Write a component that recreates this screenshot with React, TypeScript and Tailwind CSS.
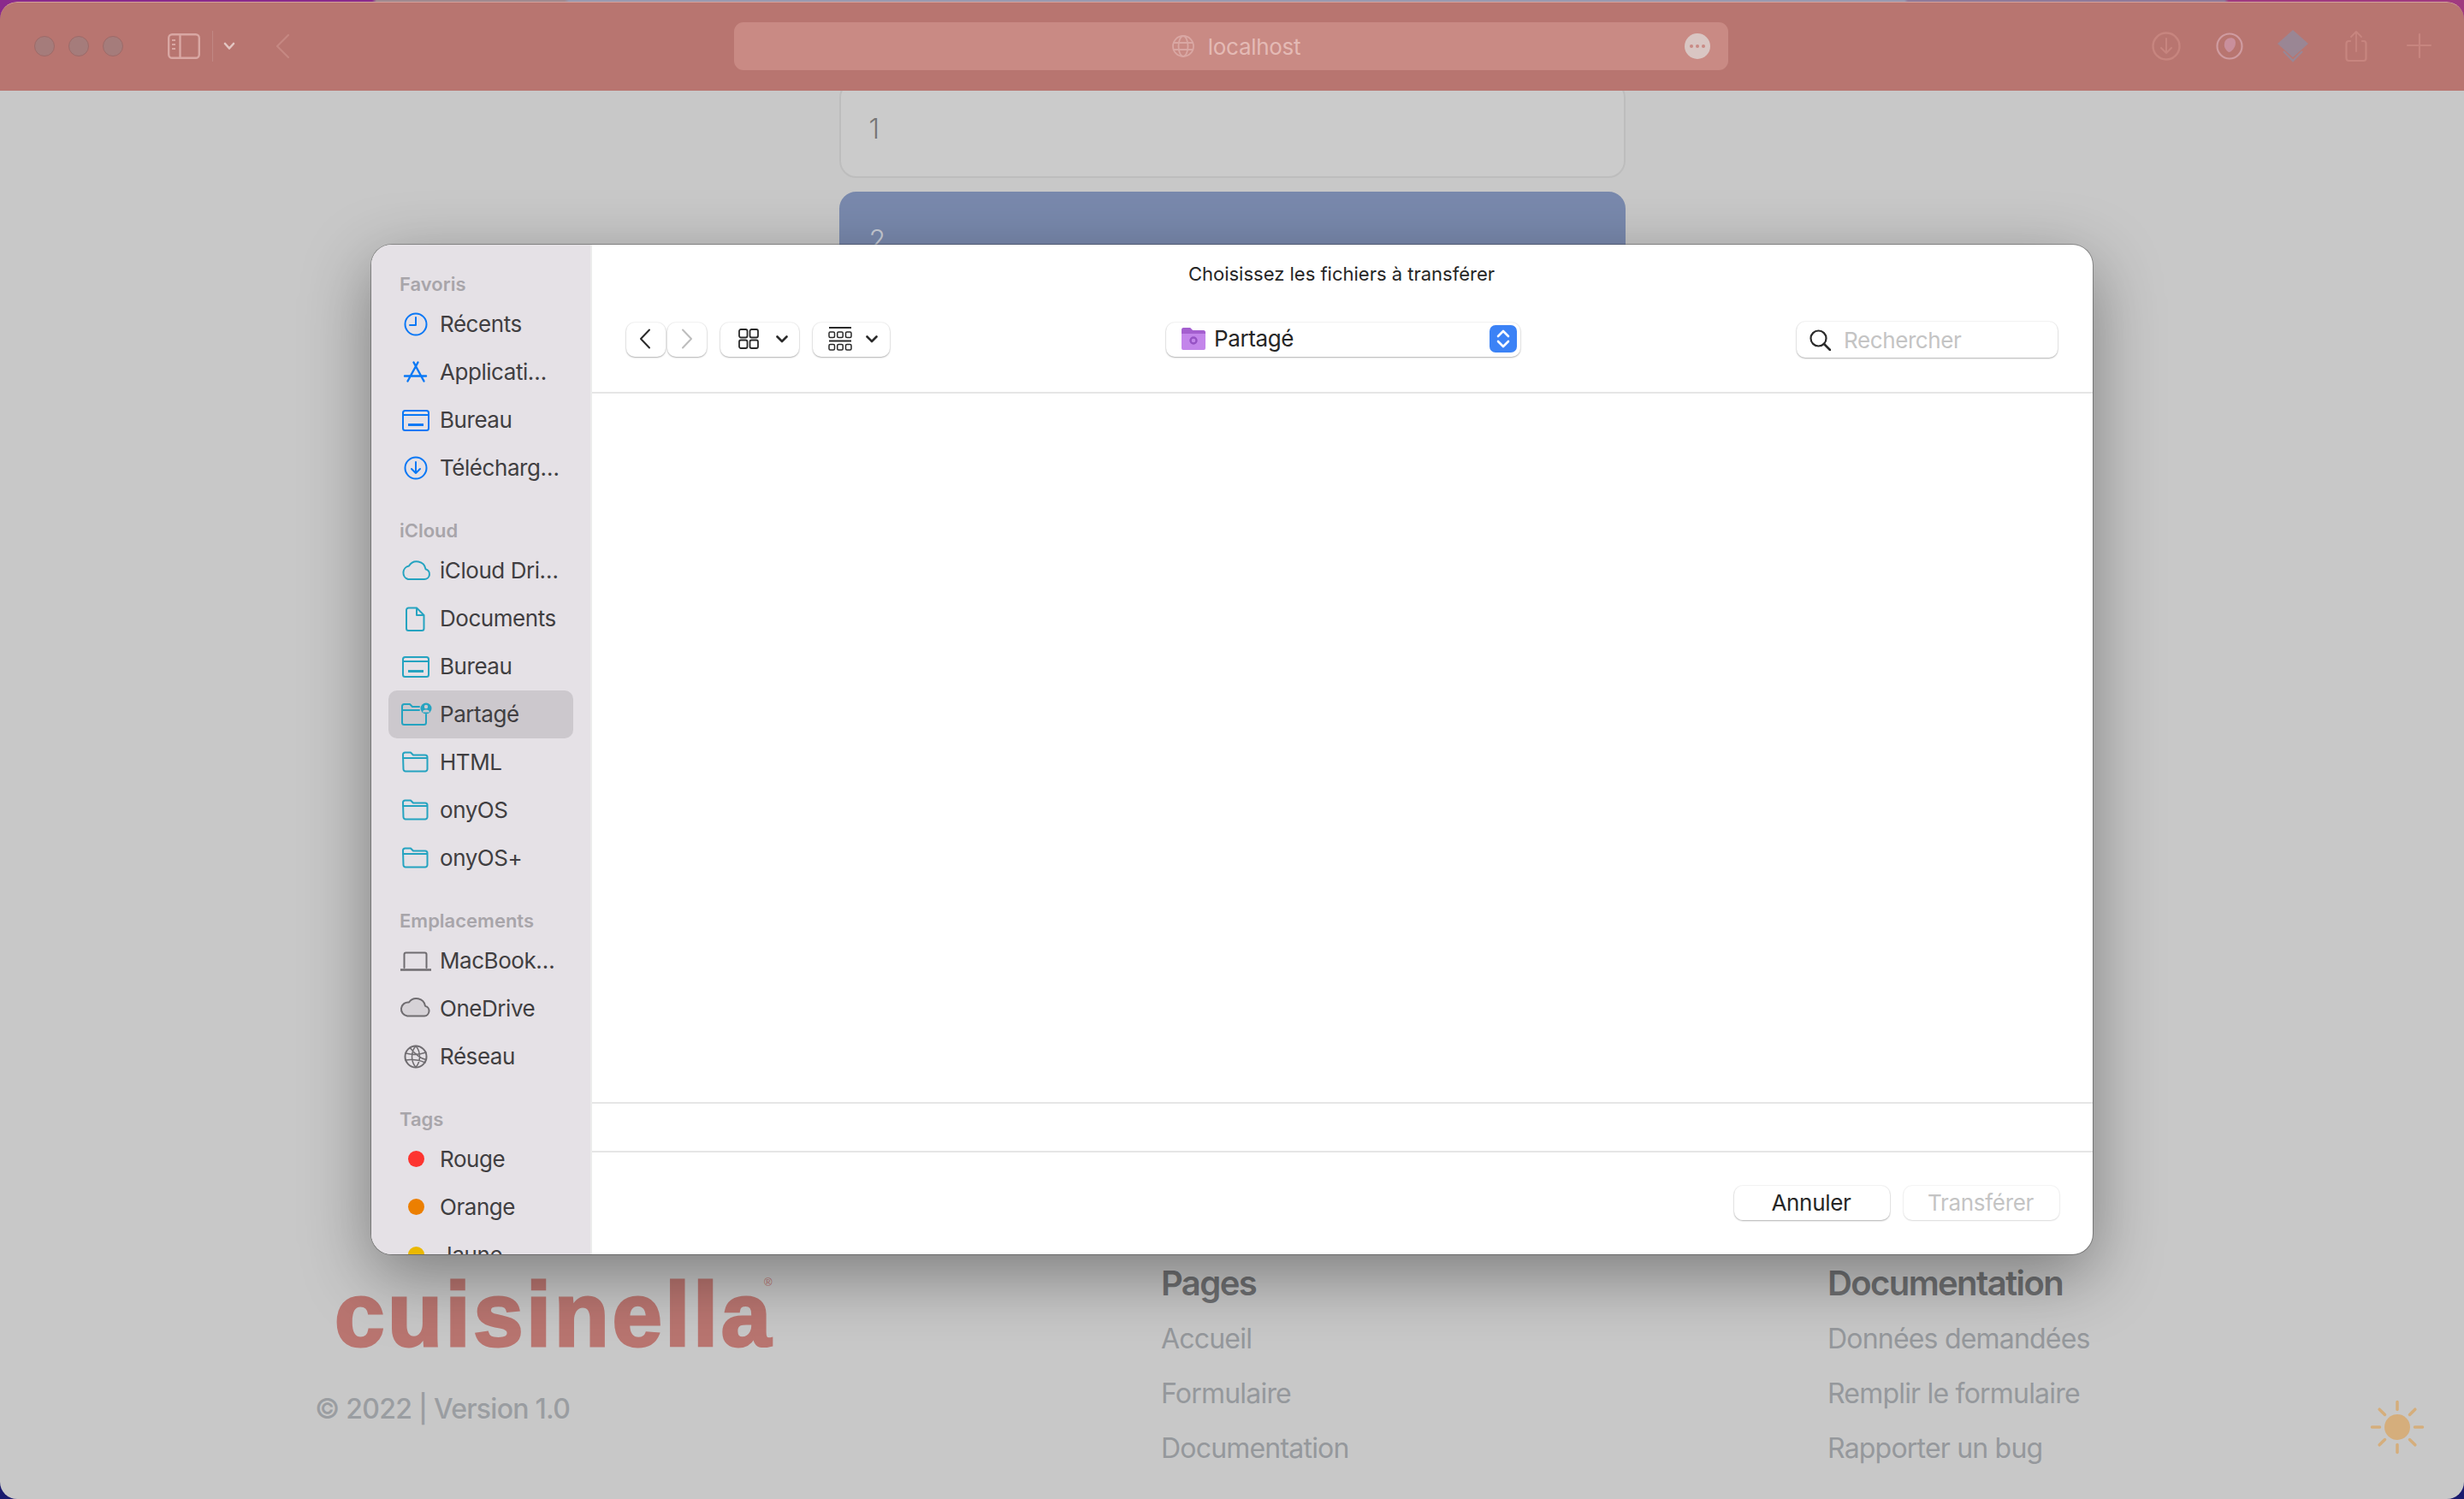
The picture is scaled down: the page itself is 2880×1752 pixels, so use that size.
import type { ReactNode } from 'react'

const blue = 'text-[#0a78f5]'
const teal = 'text-[#25a3c0]'
const gray = 'text-[#6f6c70]'

function Icon({ children, className = '' }: { children: ReactNode; className?: string }) {
  return (
    <svg viewBox="0 0 36 36" fill="none" stroke="currentColor" strokeWidth="2" strokeLinecap="round" strokeLinejoin="round" className={`h-9 w-9 shrink-0 overflow-visible ${className}`}>
      {children}
    </svg>
  )
}

const folderPath = 'M3 9a2.5 2.5 0 0 1 2.5-2.5h6.5l3 3h14a2.5 2.5 0 0 1 2.5 2.5v14a2.5 2.5 0 0 1-2.5 2.5h-23a2.5 2.5 0 0 1-2.5-2.5z'

const icons = {
  clock: (
    <>
      <circle cx="18" cy="18" r="12.5" />
      <path d="M18 10v9h-7" />
    </>
  ),
  apps: <path d="M15.5 6.5L27.5 28.5M20.5 6.5L8.5 28.5M5 22.5h25" strokeWidth="2.4" />,
  desktop: (
    <>
      <rect x="3" y="7" width="30" height="23" rx="2.5" />
      <path d="M3 12h30" />
      <rect x="9" y="22" width="18" height="3" fill="currentColor" stroke="none" />
    </>
  ),
  download: (
    <>
      <circle cx="18" cy="18" r="12.5" />
      <path d="M18 11v13M13 19l5 5 5-5" />
    </>
  ),
  cloud: <path d="M9 28h19a6 6 0 0 0 1.5-11.8A10.5 10.5 0 0 0 10 12.5 8 8 0 0 0 9 28z" />,
  doc: <path d="M9.5 5.5H19L27.5 14v15.5a2.5 2.5 0 0 1-2.5 2.5H9.5A2.5 2.5 0 0 1 7 29.5V8a2.5 2.5 0 0 1 2.5-2.5zM19 5.5V14h8.5" />,
  folder: (
    <>
      <path d={folderPath} />
      <path d="M3 13h28" />
    </>
  ),
  shared: (
    <>
      <path d="M22 9h-8l-3-3H4.500A2.500 2.500 0 0 0 2 8.500v19A2.500 2.500 0 0 0 4.500 30h23a2.500 2.500 0 0 0 2.500-2.500V18M2 13h20" />
      <circle cx="30" cy="11" r="6.500" fill="currentColor" stroke="none" />
      <circle cx="30" cy="9" r="2.200" fill="#ccc8cd" stroke="none" />
      <path d="M26 15.500a4 3 0 0 1 8 0z" fill="#ccc8cd" stroke="none" />
    </>
  ),
  laptop: (
    <>
      <path d="M4.500 26V10.500A2 2 0 0 1 6.500 8.500h22a2 2 0 0 1 2 2V26" />
      <path d="M0 28.500h36" strokeWidth="2.600" strokeLinecap="butt" />
    </>
  ),
  onedrive: <path d="M8 26.500h20a6 6 0 0 0 1-11.800A10.500 10.500 0 0 0 10 10.500 8 8 0 0 0 8 26.500z" fill="#d6d2d7" />,
  globe: (
    <>
      <circle cx="18" cy="18" r="12.500" />
      <path d="M6 14c8 2 16 2 24-1M6 22c8-1 16 0 23 3M18 5.500c-6 7-6 18 0 25M18 5.500c6 7 6 18 0 25M11 7.500c5 6 12 13 19 14" strokeWidth="1.500" />
    </>
  )
}

type Row = { label: string; icon?: keyof typeof icons; color?: string; dot?: string; active?: boolean }

const sections: { title: string; rows: Row[] }[] = [
  {
    title: 'Favoris',
    rows: [
      { label: 'Récents', icon: 'clock', color: blue },
      { label: 'Applicati…', icon: 'apps', color: blue },
      { label: 'Bureau', icon: 'desktop', color: blue },
      { label: 'Télécharg…', icon: 'download', color: blue }
    ]
  },
  {
    title: 'iCloud',
    rows: [
      { label: 'iCloud Dri…', icon: 'cloud', color: teal },
      { label: 'Documents', icon: 'doc', color: teal },
      { label: 'Bureau', icon: 'desktop', color: teal },
      { label: 'Partagé', icon: 'shared', color: teal, active: true },
      { label: 'HTML', icon: 'folder', color: teal },
      { label: 'onyOS', icon: 'folder', color: teal },
      { label: 'onyOS+', icon: 'folder', color: teal }
    ]
  },
  {
    title: 'Emplacements',
    rows: [
      { label: 'MacBook…', icon: 'laptop', color: gray },
      { label: 'OneDrive', icon: 'onedrive', color: gray },
      { label: 'Réseau', icon: 'globe', color: gray }
    ]
  },
  {
    title: 'Tags',
    rows: [
      { label: 'Rouge', dot: 'bg-[#fd3430]' },
      { label: 'Orange', dot: 'bg-[#ec7f00]' },
      { label: 'Jaune', dot: 'bg-[#eab800]' }
    ]
  }
]

function Sidebar() {
  return (
    <aside className="h-full w-[258px] shrink-0 overflow-hidden border-r-2 border-[#ececec] bg-[#e5e1e6] pl-[20px] pt-[27px]">
      {sections.map((section) => (
        <div key={section.title} className="mb-[26px]">
          <div className="flex h-[38px] items-center pl-[13px] text-[22px] font-semibold text-[#a8a5aa]">{section.title}</div>
          {section.rows.map((row) => (
            <div key={row.label + section.title} className={`flex h-14 w-[216px] items-center gap-[10px] rounded-[10px] pb-[1px] pl-[14px] text-[26px] tracking-[-0.45px] text-[#403e41] ${row.active ? 'bg-[#ccc8cd]' : ''}`}>
              {row.icon ? (
                <Icon className={row.color}>{icons[row.icon]}</Icon>
              ) : (
                <span className="flex h-9 w-9 shrink-0 items-center justify-center">
                  <span className={`h-[19px] w-[19px] rounded-full ${row.dot}`} />
                </span>
              )}
              <span className="whitespace-nowrap">{row.label}</span>
            </div>
          ))}
        </div>
      ))}
    </aside>
  )
}

const btn = 'flex h-10 items-center rounded-[10px] bg-white pb-[2px] shadow-[0_1px_2px_rgba(0,0,0,0.28),0_0_0_1px_rgba(0,0,0,0.04)]'

function Chevron() {
  return (
    <svg viewBox="0 0 14 9" className="h-[9px] w-[14px]" fill="none" stroke="#2a2a2a" strokeWidth="2.600" strokeLinecap="round" strokeLinejoin="round">
      <path d="M1.500 1.500L7 7l5.500-5.500" />
    </svg>
  )
}

function DialogToolbar() {
  return (
    <div className="flex items-center justify-between pl-[40px] pr-[41px]">
      <div className="flex w-[308px] items-center">
        <div className={`${btn} w-[46px] justify-center pr-[2px]`}>
          <svg viewBox="0 0 14 24" className="h-6 w-[14px]" fill="none" stroke="#2a2a2a" strokeWidth="2" strokeLinecap="round" strokeLinejoin="round">
            <path d="M12 1.500L2 12l10 10.500" />
          </svg>
        </div>
        <div className={`${btn} ml-[2px] w-[46px] justify-center`}>
          <svg viewBox="0 0 14 24" className="h-6 w-[14px]" fill="none" stroke="#bdbdbd" strokeWidth="2" strokeLinecap="round" strokeLinejoin="round">
            <path d="M2 1.500L12 12 2 22.500" />
          </svg>
        </div>
        <div className={`${btn} ml-4 w-[92px] gap-[20px] pl-[21px]`}>
          <svg viewBox="0 0 24 24" className="h-6 w-6" fill="none" stroke="#2a2a2a" strokeWidth="1.800">
            <rect x="1" y="1" width="9.500" height="9.500" rx="2" />
            <rect x="13.500" y="1" width="9.500" height="9.500" rx="2" />
            <rect x="1" y="13.500" width="9.500" height="9.500" rx="2" />
            <rect x="13.500" y="13.500" width="9.500" height="9.500" rx="2" />
          </svg>
          <Chevron />
        </div>
        <div className={`${btn} ml-4 w-[90px] gap-[16px] pl-[18px]`}>
          <svg viewBox="0 0 28 28" className="h-7 w-7" fill="none" stroke="#2a2a2a" strokeWidth="1.500">
            <path d="M1 1h26M1 16.500h26" strokeWidth="1.800" />
            <rect x="1" y="6" width="6.500" height="6.500" rx="1.500" />
            <rect x="10.700" y="6" width="6.500" height="6.500" rx="1.500" />
            <rect x="20.500" y="6" width="6.500" height="6.500" rx="1.500" />
            <rect x="1" y="20.500" width="6.500" height="6.500" rx="1.500" />
            <rect x="10.700" y="20.500" width="6.500" height="6.500" rx="1.500" />
            <rect x="20.500" y="20.500" width="6.500" height="6.500" rx="1.500" />
          </svg>
          <Chevron />
        </div>
      </div>

      <div className={`${btn} w-[414px] pl-[18px] pr-1 text-[26px] tracking-[-0.4px] text-[#262626]`}>
        <svg viewBox="0 0 28 26" className="h-[26px] w-7 shrink-0">
          <path d="M0 3a3 3 0 0 1 3-3h7l3 3h12a3 3 0 0 1 3 3v18a2 2 0 0 1-2 2H2a2 2 0 0 1-2-2z" fill="#c385ea" />
          <path d="M0 3a3 3 0 0 1 3-3h7l3 3h12a3 3 0 0 1 3 3v1H0z" fill="#a45fcf" />
          <circle cx="14" cy="15" r="3.500" fill="none" stroke="#9652c4" strokeWidth="2.400" />
        </svg>
        <span className="ml-[10px] pb-[2px]">Partagé</span>
        <span className="ml-auto flex h-8 w-8 items-center justify-center rounded-[7px] bg-[#3b82f6]">
          <svg viewBox="0 0 18 24" className="h-6 w-[18px]" fill="none" stroke="white" strokeWidth="2.600" strokeLinecap="round" strokeLinejoin="round">
            <path d="M3 9l6-6 6 6M3 15l6 6 6-6" />
          </svg>
        </span>
      </div>

      <div className="flex h-[42px] w-[305px] items-center rounded-[10px] bg-white pl-[15px] text-[26px] tracking-[-0.4px] text-[#c4c4c4] shadow-[0_1px_2px_rgba(0,0,0,0.28),0_0_0_1px_rgba(0,0,0,0.04)]">
        <svg viewBox="0 0 25 25" className="h-[25px] w-[25px] shrink-0" fill="none" stroke="#2a2a2a" strokeWidth="2.200" strokeLinecap="round">
          <circle cx="10.500" cy="10.500" r="9" />
          <path d="M17 17l7 7" strokeWidth="2.600" />
        </svg>
        <span className="ml-[15px]">Rechercher</span>
      </div>
    </div>
  )
}

function FileDialog() {
  return (
    <div className="absolute left-[434px] top-[286px] flex h-[1180px] w-[2012px] overflow-hidden rounded-[24px] bg-white font-['Inter',sans-serif] shadow-[0_24px_80px_rgba(0,0,0,0.38),0_0_0_1px_rgba(0,0,0,0.28)]">
      <Sidebar />
      <div className="flex min-w-0 flex-1 flex-col">
        <div className="h-[172px] shrink-0">
          <div className="flex h-[69px] items-center justify-center pr-[2px] text-[22px] text-[#262626]">Choisissez les fichiers à transférer</div>
          <div className="pt-[21px]">
            <DialogToolbar />
          </div>
        </div>
        <div className="flex-1 border-y-2 border-[#e6e6e6]" />
        <div className="h-[57px] shrink-0 border-b-2 border-[#e6e6e6]" />
        <div className="flex h-[119px] shrink-0 justify-end gap-4 pr-[39px] pt-[39px] text-[26px] tracking-[-0.3px]">
          <div className={`${btn} w-[182px] justify-center pr-[2px] text-[#262626]`}>Annuler</div>
          <div className="flex h-10 w-[182px] items-center justify-center rounded-[10px] bg-white pb-[2px] pr-[2px] text-[#c4c4c4] shadow-[0_1px_2px_rgba(0,0,0,0.1),0_0_0_1px_rgba(0,0,0,0.04)]">Transférer</div>
        </div>
      </div>
    </div>
  )
}

function BrowserToolbar() {
  return (
    <header className="relative z-10 flex h-[104px] shrink-0 items-center rounded-t-[20px] border-t border-[#d49f9a] bg-[#b87570] pb-[2px]">
      <div className="flex w-[858px] shrink-0 items-center pl-10">
        <div className="flex gap-4">
          <span className="h-6 w-6 rounded-full border border-[#9d6a68] bg-[#a57c7b]" />
          <span className="h-6 w-6 rounded-full border border-[#9d6a68] bg-[#a57c7b]" />
          <span className="h-6 w-6 rounded-full border border-[#9d6a68] bg-[#a57c7b]" />
        </div>
        <svg viewBox="0 0 38 30" className="ml-[52px] h-[30px] w-[38px]" fill="none" stroke="#d9a7a3" strokeWidth="2.400">
          <rect x="1.200" y="1.200" width="35.600" height="27.600" rx="4" />
          <path d="M14.500 1v28" />
          <path d="M5 8h4M5 13h4M5 18h4" strokeWidth="2" />
        </svg>
        <span className="ml-[14px] h-9 w-px bg-[#c08783]" />
        <svg viewBox="0 0 14 10" className="ml-[12px] h-[10px] w-[14px]" fill="none" stroke="#e3c6c2" strokeWidth="2.600" strokeLinecap="round" strokeLinejoin="round">
          <path d="M2 2l5 5.500L12 2" />
        </svg>
        <svg viewBox="0 0 18 30" className="ml-[46px] h-[30px] w-[18px]" fill="none" stroke="#c58882" strokeWidth="2.200" strokeLinecap="round" strokeLinejoin="round">
          <path d="M16 2L3 15l13 13" />
        </svg>
      </div>

      <div className="relative flex h-14 w-[1162px] shrink-0 items-center justify-center gap-[16px] rounded-[11px] bg-[#c98a84] pl-[12px] font-['Inter',sans-serif] text-[26px] tracking-[-0.3px] text-[#e4bab5]">
        <svg viewBox="0 0 26 26" className="h-[26px] w-[26px]" fill="none" stroke="#d9a7a3" strokeWidth="1.800">
          <circle cx="13" cy="13" r="12" />
          <ellipse cx="13" cy="13" rx="5.500" ry="12" />
          <path d="M2 9h22M2 17h22" />
        </svg>
        <span className="pt-[2px]">localhost</span>
        <span className="absolute right-[21px] flex h-[30px] w-[30px] items-center justify-center gap-[3px] rounded-full bg-[#d9c6c3]">
          <span className="h-1 w-1 rounded-full bg-[#c98a84]" />
          <span className="h-1 w-1 rounded-full bg-[#c98a84]" />
          <span className="h-1 w-1 rounded-full bg-[#c98a84]" />
        </span>
      </div>

      <div className="flex flex-1 items-center justify-end gap-[34px] pr-[32px]">
        <svg viewBox="0 0 40 40" className="h-10 w-10" fill="none" stroke="#c7857f" strokeWidth="2.400" strokeLinecap="round" strokeLinejoin="round">
          <circle cx="20" cy="20" r="15.500" />
          <path d="M20 11v17M14 22l6 6 6-6" strokeWidth="2" />
        </svg>
        <svg viewBox="0 0 40 40" className="h-10 w-10" fill="none">
          <circle cx="20" cy="20" r="14.500" stroke="#cf9ba0" strokeWidth="2.200" />
          <path d="M18 11c5-2 9 0 9 5 0 6-5 11-8 11-3-2-6-6-5-10 0-3 2-5 4-6z" fill="#c98f9c" />
        </svg>
        <svg viewBox="0 0 40 40" className="h-10 w-10">
          <path d="M20 1l18 16-18 16L2 17z" fill="#9a8694" />
          <path d="M9 26l11 11 11-11" fill="none" stroke="#9a8694" strokeWidth="2.400" />
        </svg>
        <svg viewBox="0 0 40 40" className="h-10 w-10" fill="none" stroke="#c7857f" strokeWidth="2.200" strokeLinecap="round" strokeLinejoin="round">
          <path d="M13 15h-1.500a3 3 0 0 0-3 3v17a3 3 0 0 0 3 3h17a3 3 0 0 0 3-3V18a3 3 0 0 0-3-3H27" transform="translate(0 -1)" />
          <path d="M20 26V3M14 9l6-6 6 6" strokeWidth="1.800" />
        </svg>
        <svg viewBox="0 0 40 40" className="h-10 w-10" fill="none" stroke="#c7857f" strokeWidth="2.200" strokeLinecap="round">
          <path d="M20 6v27M6 19h27" />
        </svg>
      </div>
    </header>
  )
}

function Card({ label, active }: { label: string; active?: boolean }) {
  return (
    <div className={`flex h-[114px] items-center rounded-[20px] border-2 pl-[33px] text-[32px] font-light ${active ? 'border-[#7989ad] bg-[#7989ad] text-[#c9cdd6]' : 'border-[#bdbdbd] bg-[#cbcbcb] text-[#767676]'}`}>
      {label}
    </div>
  )
}

function FooterColumn({ title, links }: { title: string; links: string[] }) {
  return (
    <div>
      <h3 className="flex h-12 items-center text-[40px] font-semibold tracking-[-1.6px] text-[#6f7072]">{title}</h3>
      <ul className="mt-[9px] text-[32px] tracking-[-0.8px] text-[#95989c]">
        {links.map((link) => (
          <li key={link} className="flex h-16 items-center whitespace-nowrap">
            {link}
          </li>
        ))}
      </ul>
    </div>
  )
}

function Sun() {
  const rays = [0, 45, 90, 135, 180, 225, 270, 315]
  return (
    <svg viewBox="0 0 64 64" className="absolute right-[46px] top-[196px] h-16 w-16" stroke="#d5ae7c" strokeWidth="3.500" strokeLinecap="round">
      <circle cx="32" cy="32" r="15" fill="#d5ae7c" stroke="none" />
      {rays.map((angle) => (
        <path key={angle} d="M32 2.500v9" transform={`rotate(${angle} 32 32)`} />
      ))}
    </svg>
  )
}

export default function App() {
  return (
    <div className="relative h-[1752px] w-[2880px] overflow-hidden bg-[linear-gradient(180deg,transparent_60px,#1a1a6e_60px),linear-gradient(90deg,#8a2a8c_0,#8a2a8c_435px,#a08a90_440px,#a08a90_660px,#9a9ab0_665px,#9a9ab0_2226px,#8f7a9a_2230px,#8f7a9a_2600px,#a03a80_2605px,#a03a80_100%)] pt-[2px] font-['Inter',sans-serif]">
      <div className="flex h-full flex-col overflow-hidden rounded-b-[20px] rounded-t-[20px]">
        <BrowserToolbar />
        <main className="min-h-0 flex-1 overflow-hidden bg-[#c8c8c8]">
          <div className="mx-auto -mt-[12px] flex w-[919px] flex-col gap-[16px]">
            <Card label="1" />
            <Card label="2" active />
          </div>
        </main>
        <footer className="relative flex h-[312px] shrink-0 bg-[#c8c8c8] pl-[369px]">
          <div className="w-[988px] shrink-0 pt-[47px]">
            <div className="relative ml-[22px] w-fit font-['Liberation_Sans',sans-serif] text-[105px] font-bold leading-[100px] tracking-[3.5px] text-[#b97570] [-webkit-text-stroke:3px_#b97570]">
              cuisinella
              <span className="absolute right-[2px] top-[5px] text-[13px] font-normal leading-[13px] tracking-normal [-webkit-text-stroke:0]">®</span>
            </div>
            <p className="ml-[-1px] mt-[40px] text-[32px] font-medium leading-10 tracking-[-0.75px] text-[#9a9da1]">© 2022 | Version 1.0</p>
          </div>
          <div className="w-[779px] shrink-0 pt-[36px]">
            <FooterColumn title="Pages" links={['Accueil', 'Formulaire', 'Documentation']} />
          </div>
          <div className="pt-[36px]">
            <FooterColumn title="Documentation" links={['Données demandées', 'Remplir le formulaire', 'Rapporter un bug']} />
          </div>
          <Sun />
        </footer>
      </div>
      <FileDialog />
    </div>
  )
}
